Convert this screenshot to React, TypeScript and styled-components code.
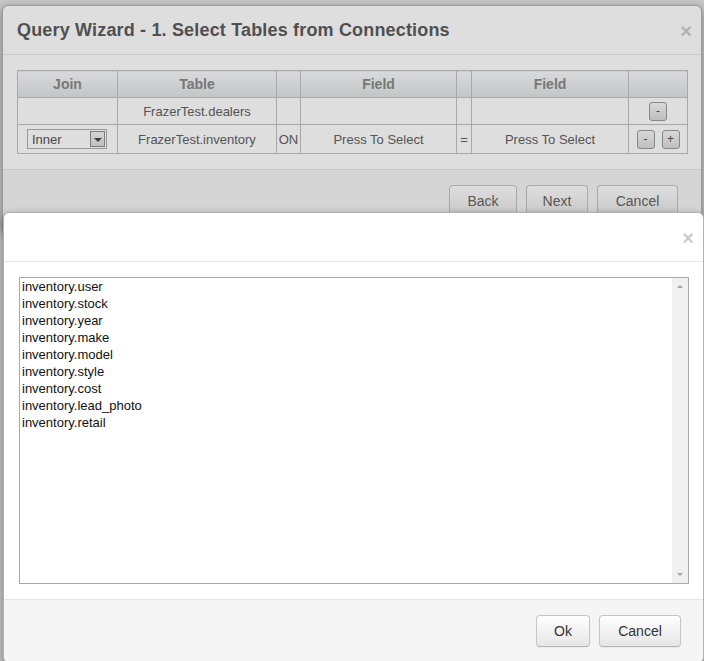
import React from "react";
import styled, { createGlobalStyle } from "styled-components";

const Global = createGlobalStyle`
  html, body { margin: 0; padding: 0; }
  body {
    font-family: "Liberation Sans", Arial, sans-serif;
    background: #e2e2e2;
    overflow: hidden;
  }
`;

const Stage = styled.div`
  position: relative;
  width: 704px;
  height: 661px;
  overflow: hidden;
  background: #e4e4e4;
`;

const Modal = styled.div<{ $left: number; $top: number; $width: number }>`
  position: absolute;
  left: ${(p) => p.$left}px;
  top: ${(p) => p.$top}px;
  width: ${(p) => p.$width}px;
  background: #fff;
  border: 1px solid rgba(0, 0, 0, 0.3);
  border-radius: 6px;
  box-shadow: 0 3px 9px rgba(0, 0, 0, 0.4);
  box-sizing: border-box;
  font-family: "Liberation Sans", Arial, sans-serif;
`;

const Backdrop = styled.div`
  position: absolute;
  inset: 0;
  background: rgba(0, 0, 0, 0.13);
`;

const Header = styled.div`
  height: 48px;
  display: flex;
  align-items: center;
  justify-content: space-between;
  padding: 0 9px 0 14px;
  border-bottom: 1px solid #e5e5e5;
`;

const Title = styled.h3`
  margin: 0;
  font-size: 18px;
  font-weight: bold;
  letter-spacing: 0.17px;
  color: #5c5c5c;
  line-height: 20px;
`;

const Close = styled.span`
  font-size: 20px;
  font-weight: bold;
  line-height: 1;
  color: #000;
  opacity: 0.2;
  margin-top: 2px;
`;

const Body = styled.div<{ $left: number }>`
  padding: 15px 14px 15px ${(p) => p.$left}px;
`;

const Footer = styled.div<{ $right: number }>`
  display: flex;
  justify-content: flex-end;
  gap: 9px;
  padding: 15px ${(p) => p.$right}px 15px 15px;
  background: #f5f5f5;
  border-top: 1px solid #e5e5e5;
  border-radius: 0 0 6px 6px;
`;

const Button = styled.button<{ $w: number; $dim?: boolean }>`
  width: ${(p) => p.$w}px;
  height: 32px;
  padding: 0;
  font-family: "Liberation Sans", Arial, sans-serif;
  font-size: 14px;
  color: ${(p) => (p.$dim ? "#666" : "#333")};
  background: linear-gradient(#ffffff, #e6e6e6);
  border: 1px solid #c5c5c5;
  border-bottom-color: #b3b3b3;
  border-radius: 4px;
  box-shadow: inset 0 1px 0 rgba(255, 255, 255, 0.2), 0 1px 2px rgba(0, 0, 0, 0.05);
`;

const JoinTable = styled.table`
  width: 670px;
  border-collapse: collapse;
  table-layout: fixed;
  font-size: 13px;
  color: #626262;
`;

const Th = styled.th<{ $w: number }>`
  width: ${(p) => p.$w}px;
  height: 26px;
  padding: 0;
  font-size: 14px;
  font-weight: bold;
  color: #8a8a8a;
  background: linear-gradient(#f9fbfc, #dfe3e4);
  border: 1px solid #c1c1c1;
  text-align: center;
`;

const Td = styled.td<{ $h: number }>`
  height: ${(p) => p.$h}px;
  padding: 0;
  border: 1px solid #c1c1c1;
  text-align: center;
  white-space: nowrap;
`;

const FakeSelect = styled.div`
  width: 80px;
  height: 20px;
  margin-left: 9px;
  box-sizing: border-box;
  display: flex;
  align-items: center;
  justify-content: space-between;
  border: 1px solid #b0b0b0;
  background: #fff;
  padding: 0 1px 0 4px;
  text-align: left;
  color: #555;
`;

const SelectArrow = styled.span`
  width: 15px;
  height: 16px;
  box-sizing: border-box;
  display: flex;
  align-items: center;
  justify-content: center;
  border: 1px solid #8f8f8f;
  background: linear-gradient(#f4f4f4, #dcdcdc);
  &::after {
    content: "";
    border-left: 4px solid transparent;
    border-right: 4px solid transparent;
    border-top: 4px solid #444;
    margin-top: 1px;
  }
`;

const ActionWrap = styled.div`
  display: flex;
  justify-content: center;
  gap: 7px;
`;

const SmallBtn = styled.span`
  width: 18px;
  height: 19px;
  box-sizing: border-box;
  display: inline-flex;
  align-items: center;
  justify-content: center;
  border: 1px solid #9c9c9c;
  border-radius: 3px;
  background: linear-gradient(#f8f8f8, #dcdcdc);
  font-size: 12px;
  color: #555;
  line-height: 1;
`;

const ListBox = styled.div`
  height: 307px;
  box-sizing: border-box;
  border: 1px solid #a9a9a9;
  display: flex;
  background: #fff;
`;

const Options = styled.div`
  flex: 1;
  padding: 0 2px;
  font-size: 13px;
  line-height: 17px;
  color: #111;
`;

const Scrollbar = styled.div`
  width: 16px;
  background: #f0f0f0;
  display: flex;
  flex-direction: column;
  justify-content: space-between;
  align-items: center;
  padding: 7px 0;
  box-sizing: border-box;
`;

const Arrow = styled.span<{ $up?: boolean }>`
  width: 0;
  height: 0;
  border-left: 3px solid transparent;
  border-right: 3px solid transparent;
  ${(p) =>
    p.$up ? "border-bottom: 3px solid #a3a3a3;" : "border-top: 3px solid #a3a3a3;"}
`;

const fields = [
  "inventory.user",
  "inventory.stock",
  "inventory.year",
  "inventory.make",
  "inventory.model",
  "inventory.style",
  "inventory.cost",
  "inventory.lead_photo",
  "inventory.retail",
];

export default function App() {
  return (
    <Stage>
      <Global />
      <Modal $left={2} $top={5} $width={700}>
        <Header>
          <Title>Query Wizard - 1. Select Tables from Connections</Title>
          <Close>×</Close>
        </Header>
        <Body $left={14}>
          <JoinTable>
            <thead>
              <tr>
                <Th $w={99}>Join</Th>
                <Th $w={158}>Table</Th>
                <Th $w={23}></Th>
                <Th $w={155}>Field</Th>
                <Th $w={14}></Th>
                <Th $w={156}>Field</Th>
                <Th $w={58}></Th>
              </tr>
            </thead>
            <tbody>
              <tr>
                <Td $h={26}></Td>
                <Td $h={26}>FrazerTest.dealers</Td>
                <Td $h={26}></Td>
                <Td $h={26}></Td>
                <Td $h={26}></Td>
                <Td $h={26}></Td>
                <Td $h={26}>
                  <ActionWrap>
                    <SmallBtn>-</SmallBtn>
                  </ActionWrap>
                </Td>
              </tr>
              <tr>
                <Td $h={28}>
                  <FakeSelect>
                    <span>Inner</span>
                    <SelectArrow />
                  </FakeSelect>
                </Td>
                <Td $h={28}>FrazerTest.inventory</Td>
                <Td $h={28}>ON</Td>
                <Td $h={28}>Press To Select</Td>
                <Td $h={28}>=</Td>
                <Td $h={28}>Press To Select</Td>
                <Td $h={28}>
                  <ActionWrap>
                    <SmallBtn>-</SmallBtn>
                    <SmallBtn>+</SmallBtn>
                  </ActionWrap>
                </Td>
              </tr>
            </tbody>
          </JoinTable>
        </Body>
        <Footer $right={23}>
          <Button $w={68} $dim>Back</Button>
          <Button $w={62} $dim>Next</Button>
          <Button $w={81} $dim>Cancel</Button>
        </Footer>
      </Modal>
      <Backdrop />
      <Modal $left={3} $top={212} $width={701}>
        <Header>
          <span />
          <Close>×</Close>
        </Header>
        <Body $left={15}>
          <ListBox>
            <Options>
              {fields.map((f) => (
                <div key={f}>{f}</div>
              ))}
            </Options>
            <Scrollbar>
              <Arrow $up />
              <Arrow />
            </Scrollbar>
          </ListBox>
        </Body>
        <Footer $right={22}>
          <Button $w={54}>Ok</Button>
          <Button $w={82}>Cancel</Button>
        </Footer>
      </Modal>
    </Stage>
  );
}
